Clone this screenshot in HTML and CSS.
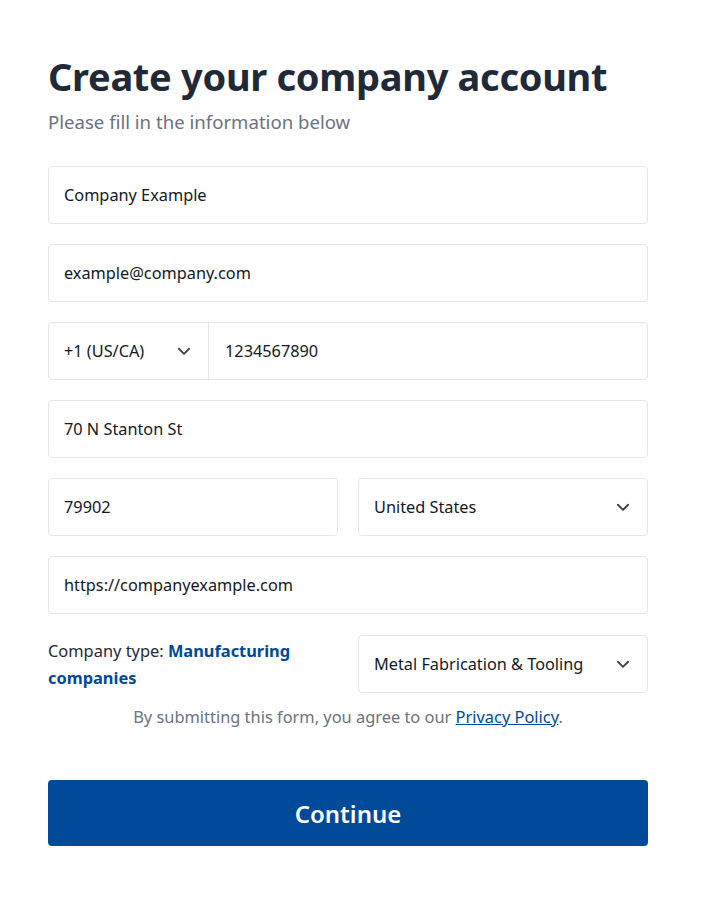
FILE: index.html
```html
<!DOCTYPE html>
<html lang="en">
<head>
    <meta charset="UTF-8">
    <meta name="viewport" content="width=device-width, initial-scale=1.0">
    <title>Create your company account</title>
    <link rel="stylesheet" href="styles.css">
</head>
<body>
    <div class="signup">
        <h1 class="title">Create your company account</h1>
        <p class="subtitle">Please fill in the information below</p>

        <form class="form">
            <div class="field">Company Example</div>
            <div class="field">example@company.com</div>

            <div class="field phone">
                <div class="phone-code">
                    <span>+1 (US/CA)</span>
                    <svg class="chevron" viewBox="0 0 16 16"><path d="M3.5 6l4.5 4.5L12.5 6"/></svg>
                </div>
                <div class="phone-number">1234567890</div>
            </div>

            <div class="field">70 N Stanton St</div>

            <div class="row">
                <div class="field">79902</div>
                <div class="field select">
                    <span>United States</span>
                    <svg class="chevron" viewBox="0 0 16 16"><path d="M3.5 6l4.5 4.5L12.5 6"/></svg>
                </div>
            </div>

            <div class="field">https://companyexample.com</div>

            <div class="row type-row">
                <div class="type-label">Company type: <b>Manufacturing</b><br><b>companies</b></div>
                <div class="field select">
                    <span>Metal Fabrication &amp; Tooling</span>
                    <svg class="chevron" viewBox="0 0 16 16"><path d="M3.5 6l4.5 4.5L12.5 6"/></svg>
                </div>
            </div>
        </form>

        <p class="terms">By submitting this form, you agree to our <a href="#">Privacy Policy</a>.</p>

        <button class="continue" type="button">Continue</button>
    </div>
</body>
</html>
```

FILE: styles.css
```css
body{
    margin: 0;
    background: #fff;
    font-family: "Noto Sans", "Open Sans", sans-serif;
    color: #1f2937;
}

.signup{
    width: 600px;
    padding: 52px 48px 40px;
}

.title{
    margin: 0;
    font-size: 38px;
    line-height: 48px;
    font-weight: 700;
    color: #1f2937;
    letter-spacing: -0.3px;
}

.subtitle{
    margin: 10px 0 0;
    font-size: 18.6px;
    line-height: 24px;
    color: #6b7280;
}

.form{
    display: flex;
    flex-direction: column;
    gap: 20px;
    margin-top: 32px;
}

.field{
    box-sizing: border-box;
    height: 58px;
    display: flex;
    align-items: center;
    padding: 0 15px;
    border: 1px solid #e5e7eb;
    border-radius: 4px;
    font-size: 16.3px;
    color: #111827;
}

.phone{
    padding: 0;
}

.phone-code{
    width: 160px;
    height: 100%;
    box-sizing: border-box;
    padding: 0 15px;
    display: flex;
    align-items: center;
    justify-content: space-between;
    border-right: 1px solid #e5e7eb;
}

.phone-number{
    padding-left: 16px;
}

.row{
    display: grid;
    grid-template-columns: 1fr 1fr;
    gap: 20px;
}

.select{
    justify-content: space-between;
}

.chevron{
    width: 18px;
    height: 18px;
    fill: none;
    stroke: #374151;
    stroke-width: 1.6;
    stroke-linecap: round;
    stroke-linejoin: round;
}

.type-row{
    align-items: center;
    margin-top: 1px;
}

.type-label{
    font-size: 16.4px;
    line-height: 27px;
    color: #1f2937;
}

.type-label b{
    color: #004a99;
    font-weight: 700;
}

.terms{
    margin: 12px 0 0;
    text-align: center;
    font-size: 16.4px;
    line-height: 24px;
    color: #6b7280;
}

.terms a{
    color: #004a99;
}

.continue{
    display: block;
    width: 100%;
    height: 66px;
    margin-top: 51px;
    border: none;
    border-radius: 4px;
    background: #004a99;
    color: #fff;
    font-family: inherit;
    font-size: 24px;
    font-weight: 600;
}
```
